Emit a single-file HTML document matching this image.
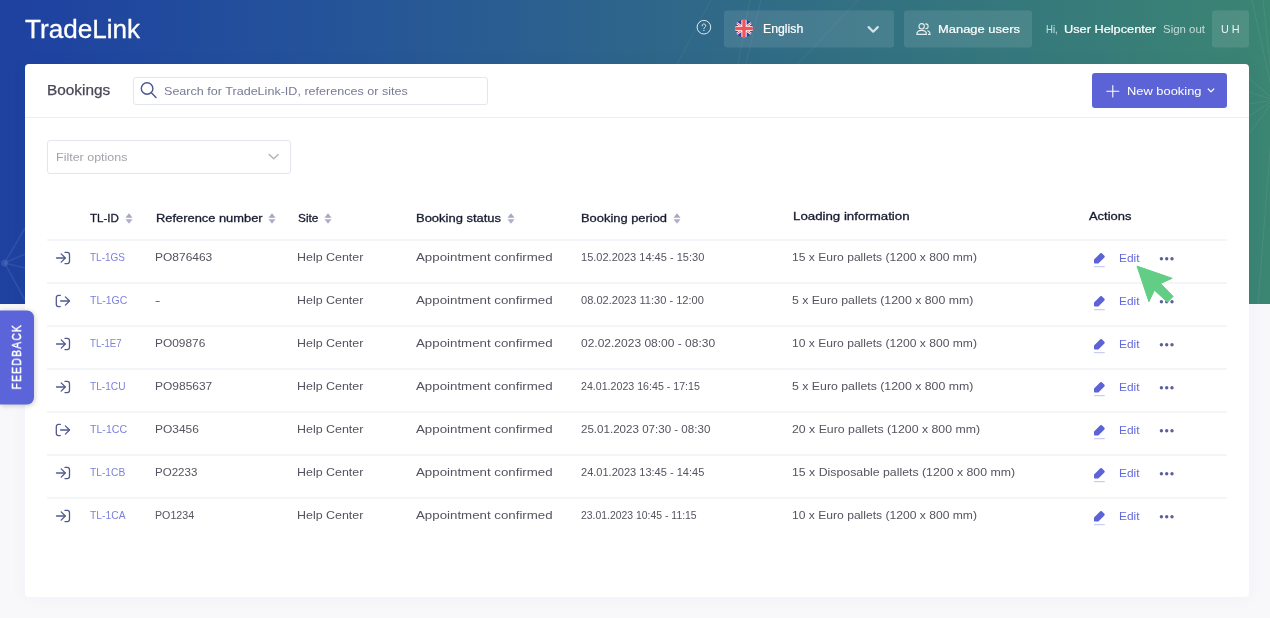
<!DOCTYPE html>
<html lang="en">
<head>
<meta charset="utf-8">
<title>TradeLink - Bookings</title>
<style>
*{box-sizing:border-box;margin:0;padding:0}
html,body{width:1270px;height:618px;overflow:hidden}
body{position:relative;background:#f8f8fb;font-family:"Liberation Sans",Arial,sans-serif;font-size:11px;color:#4b4b58}
.page{position:absolute;left:0;top:0;width:1270px;height:618px;overflow:hidden;transform:translateZ(0);will-change:transform}
a{text-decoration:none}
span,a{white-space:pre;display:inline-block;transform-origin:0 50%}
.banner{position:absolute;left:0;top:0;width:1270px;height:304px;background:linear-gradient(90deg,#1e41a0 0%,#1f44a0 5%,#24529a 24%,#2e668a 51%,#3b8573 100%);overflow:hidden}
.banner svg{position:absolute;left:0;top:0}
.logo{position:absolute;left:24.6px;top:9px;transform:translateY(.4px);font-size:26.5px;line-height:40px;color:#fff;-webkit-text-stroke:.3px #fff}
.top{position:absolute;top:10px;height:37px;line-height:37px;color:#fff;font-size:12px;transform:translateY(.5px)}
.med{-webkit-text-stroke:.2px #fff}
.pill{background:rgba(255,255,255,.1);border-radius:3px}
.top>span{position:absolute;top:0}
.dim{opacity:.72}
.top svg{position:absolute}
.help{position:absolute;left:696px;top:19.3px}
.card{position:absolute;left:25px;top:64px;width:1224px;height:533px;background:#fff;border-radius:4px;box-shadow:0 0 18px rgba(56,71,109,.04)}
.card-head{position:absolute;left:0;top:0;width:1224px;height:54px;border-bottom:1px solid #eceef4}
.title{position:absolute;left:22px;top:16px;font-size:14px;line-height:20px;color:#484658;-webkit-text-stroke:.25px #484658}
.search{position:absolute;left:108px;top:13px;width:355px;height:28px;border:1px solid #e4e6ef;border-radius:3px}
.search span{position:absolute;left:30px;top:0;line-height:27px;font-size:11.5px;color:#787b93}
.search svg{position:absolute;left:5px;top:2px}
.btn{position:absolute;left:1067px;top:9px;width:135px;height:35px;background:#5b63d6;border-radius:3px;color:#fff;line-height:35px;font-size:11px}
.btn span{position:absolute;left:34.7px;top:.7px}
.btn svg{position:absolute}
.filter{position:absolute;left:22px;top:76px;width:244px;height:34px;border:1px solid #e4e6ef;border-radius:3px;line-height:32px;font-size:11.5px;color:#a3a3ab}
.filter span{position:absolute;left:8px;top:0}
.filter svg{position:absolute;left:220px;top:12px}
table{position:absolute;left:22px;top:130px;width:1180px;border-collapse:separate;border-spacing:0;table-layout:fixed}
th,td{text-align:left;white-space:nowrap;vertical-align:top;line-height:20px;padding:0;position:relative}
th{height:47px;padding-top:15px;font-weight:normal;color:#181c32;-webkit-text-stroke:.3px #181c32;border-bottom:2px solid #f4f5f9}
th.ns{padding-top:13px}
td{height:43px;padding-top:7px;border-bottom:2px solid #f4f5f9;color:#53545f}
tr:last-child td{border-bottom:none}
a.id{color:#7c82dc}
.sort{position:relative;margin-left:5.8px;top:1px}
svg.ic{position:absolute;left:8px;top:10px}
td.act svg.pen{position:absolute;left:4px;top:11.2px}
td.act a.edit{position:absolute;left:30px;top:7.3px;color:#636ada}
td.act svg.dots{position:absolute;left:70px;top:15px}
.fb{position:absolute;left:0;top:310px;width:34px;height:94px;background:#5b64d8;border-radius:0 7px 7px 0;box-shadow:1px 1px 5px rgba(0,0,0,.18);transform:translateY(.5px)}
.fbt{position:absolute;left:8.5px;top:79px;height:16px;line-height:16px;transform:rotate(-90deg);transform-origin:0 0;color:#fff;font-size:12.5px;-webkit-text-stroke:.4px #fff}
.cursor{position:absolute;left:1130px;top:260px}
th span,td span,td a.id{position:relative;top:-.6px}
td.c-site span,td.c-load span,td.c-ref span{left:-.8px}
td.c-id a,td.c-per span,td.c-status span{left:-.3px}
</style>
</head>
<body>
<div class="page">
<div class="banner">
  <svg width="1270" height="304" viewBox="0 0 1270 304" fill="none" stroke="#fff" stroke-width="1">
    <g stroke-opacity=".06">
      <path d="M711 0 677 64M750 0 738 64M761 0 746 64M858 0 798 64"/>
      <path d="M4.5 263 25 228M4.5 263 25 254M4.5 263 25 268M4.5 263 25 300" stroke-opacity=".08" stroke-width="1.6"/>
      <path d="M1274 100 1249 78M1274 100 1249 92M1274 100 1249 104M1274 100 1249 116M1274 100 1249 134M1274 100 1258 304M1274 100 1263 0M1274 100 1252 0" stroke-opacity=".07"/>
    </g>
    <circle cx="4.5" cy="263" r="3.5" fill="#fff" fill-opacity=".1" stroke="none"/>
  </svg>
</div>
<div class="logo"><span style="transform:scaleX(0.984);margin-right:-1.9px">TradeLink</span></div>

<svg class="help" width="16" height="16" viewBox="0 0 16 16" fill="none" stroke="#fff" stroke-opacity=".85"><circle cx="7.9" cy="8.2" r="6.8" stroke-width="1"/><path d="M6.1 6.8a1.8 1.8 0 1 1 2.7 1.5c-.6.4-.9.7-.9 1.3" stroke-width=".95" stroke-linecap="round"/><circle cx="7.9" cy="11.4" r=".65" fill="#fff" fill-opacity=".85" stroke="none"/></svg>

<div class="top pill" style="left:724px;width:170px">
  <svg style="left:11.2px;top:9.3px" width="18" height="18" viewBox="0 0 18 18"><defs><clipPath id="fc"><circle cx="9" cy="9" r="9"/></clipPath></defs><g clip-path="url(#fc)"><rect width="18" height="18" fill="#3a3c9c"/><path d="M-3 0 21 18M21 0-3 18" stroke="#fff" stroke-width="2.5"/><path d="M-3 0 21 18M21 0-3 18" stroke="#ee5459" stroke-width="1"/><path d="M9 0V18M0 9H18" stroke="#fff" stroke-width="5.2"/><path d="M9 0V18M0 9H18" stroke="#ee5459" stroke-width="3.4"/></g></svg>
  <span class="med" style="left:38.8px"><span style="transform:scaleX(1.024);margin-right:0.9px">English</span></span>
  <svg style="left:142px;top:14px" width="14" height="10" viewBox="0 0 14 10" fill="none" stroke="#fff" stroke-opacity=".78" stroke-width="2.2" stroke-linecap="round" stroke-linejoin="round"><path d="M2.6 2.6 7.2 7.2 11.8 2.6"/></svg>
</div>
<div class="top pill" style="left:904px;width:128px">
  <svg style="left:12px;top:11.6px" width="15" height="13" viewBox="0 0 16 14" fill="none" stroke="#fff" stroke-opacity=".88" stroke-width="1.15" stroke-linecap="round" stroke-linejoin="round"><circle cx="6" cy="4.1" r="2.9"/><path d="M.8 12.8c0-2.6 2.3-4.3 5.2-4.3s5.2 1.7 5.2 4.3z"/><path d="M10.4 1.5a2.6 2.6 0 0 1 0 5.2"/><path d="M12.6 9c1.6.6 2.6 1.9 2.6 3.8h-1.8"/></svg>
  <span class="med" style="left:33.8px;font-size:11px"><span style="transform:scaleX(1.175);margin-right:12.2px">Manage users</span></span>
</div>
<div class="top" style="left:1045px;width:165px">
  <span style="left:0.5px;font-size:11px;opacity:.75"><span style="transform:scaleX(0.870);margin-right:-1.8px">Hi,</span></span>
  <span class="med" style="left:18.8px;font-size:11px"><span style="transform:scaleX(1.159);margin-right:12.6px">User Helpcenter</span></span>
  <span style="left:118px;font-size:10.5px;opacity:.7"><span style="transform:scaleX(1.090);margin-right:3.5px">Sign out</span></span>
</div>
<div class="top pill" style="left:1212px;width:37px"><span style="left:9px;opacity:.9;font-size:10.5px"><span style="transform:scaleX(1.034);margin-right:0.6px">U H</span></span></div>

<div class="card">
  <div class="card-head">
    <div class="title"><span style="transform:scaleX(1.097);margin-right:5.6px">Bookings</span></div>
    <div class="search">
      <svg width="20" height="20" viewBox="0 0 20 20" fill="none" stroke="#4b5390" stroke-width="1.4" stroke-linecap="round"><circle cx="8.1" cy="8.5" r="5.8"/><path d="M12.4 12.8 17 17.5"/></svg>
      <span style="transform:scaleX(1.093);margin-right:20.7px">Search for TradeLink-ID, references or sites</span>
    </div>
    <div class="btn">
      <svg style="left:14px;top:12px" width="14" height="13" viewBox="0 0 14 13" stroke="#fff" stroke-width="1.1" stroke-linecap="round"><path d="M6.8 .6V12M.8 6.3H12.8"/></svg>
      <span style="transform:scaleX(1.171);margin-right:10.9px">New booking</span>
      <svg style="left:115px;top:15px" width="8" height="5" viewBox="0 0 8 5" fill="none" stroke="#fff" stroke-width="1.2" stroke-linecap="round" stroke-linejoin="round"><path d="M1.2 1 4 3.8 6.8 1"/></svg>
    </div>
  </div>
  <div class="filter">
    <span style="transform:scaleX(1.086);margin-right:5.7px">Filter options</span>
    <svg width="12" height="8" viewBox="0 0 12 8" fill="none" stroke="#b4b4ba" stroke-width="1.5" stroke-linecap="round" stroke-linejoin="round"><path d="M1.2 1.5 5.7 5.7 10.2 1.5"/></svg>
  </div>
  <table>
    <colgroup><col style="width:43px"><col style="width:66px"><col style="width:142px"><col style="width:118px"><col style="width:165px"><col style="width:212px"><col style="width:296px"><col></colgroup>
    <thead><tr>
      <th></th>
      <th><span style="transform:scaleX(1.051);margin-right:1.4px">TL-ID</span><svg class="sort" width="8" height="11" viewBox="0 0 8 11"><path d="M4 .3 7.5 4.7H.5z" fill="#a6a7c2"/><path d="M4 10.7 7.5 6.3H.5z" fill="#adaec8"/></svg></th>
      <th><span style="transform:scaleX(1.170);margin-right:15.5px">Reference number</span><svg class="sort" width="8" height="11" viewBox="0 0 8 11"><path d="M4 .3 7.5 4.7H.5z" fill="#a6a7c2"/><path d="M4 10.7 7.5 6.3H.5z" fill="#adaec8"/></svg></th>
      <th><span style="transform:scaleX(1.075);margin-right:1.4px">Site</span><svg class="sort" width="8" height="11" viewBox="0 0 8 11"><path d="M4 .3 7.5 4.7H.5z" fill="#a6a7c2"/><path d="M4 10.7 7.5 6.3H.5z" fill="#adaec8"/></svg></th>
      <th><span style="transform:scaleX(1.179);margin-right:12.9px">Booking status</span><svg class="sort" width="8" height="11" viewBox="0 0 8 11"><path d="M4 .3 7.5 4.7H.5z" fill="#a6a7c2"/><path d="M4 10.7 7.5 6.3H.5z" fill="#adaec8"/></svg></th>
      <th><span style="transform:scaleX(1.172);margin-right:12.6px">Booking period</span><svg class="sort" width="8" height="11" viewBox="0 0 8 11"><path d="M4 .3 7.5 4.7H.5z" fill="#a6a7c2"/><path d="M4 10.7 7.5 6.3H.5z" fill="#adaec8"/></svg></th>
      <th class="ns"><span style="transform:scaleX(1.206);margin-right:19.9px">Loading information</span></th>
      <th class="ns"><span style="transform:scaleX(1.175);margin-right:6.3px">Actions</span></th>
    </tr></thead>
    <tbody>
      <tr><td><svg class="ic" width="16" height="14" viewBox="0 0 16 14" fill="none" stroke="#525990" stroke-width="1.3" stroke-linecap="round" stroke-linejoin="round"><path d="M1.5 7H10"/><path d="M6.2 2.9 10.3 7 6.2 11.1"/><path d="M10 1.4H12.2A2.3 2.3 0 0 1 14.5 3.7V10.3A2.3 2.3 0 0 1 12.2 12.6H10"/></svg></td><td class="c-id"><a class="id" style="transform:scaleX(0.909);margin-right:-3.5px">TL-1GS</a></td><td class="c-ref"><span style="transform:scaleX(1.089);margin-right:4.7px">PO876463</span></td><td class="c-site"><span style="transform:scaleX(1.131);margin-right:7.7px">Help Center</span></td><td class="c-status"><span style="transform:scaleX(1.208);margin-right:23.5px">Appointment confirmed</span></td><td class="c-per"><span style="transform:scaleX(1.003);margin-right:0.3px">15.02.2023 14:45 - 15:30</span></td><td class="c-load"><span style="transform:scaleX(1.100);margin-right:16.9px">15 x Euro pallets (1200 x 800 mm)</span></td><td class="act"><svg class="pen" width="13" height="16" viewBox="0 0 13 16"><path d="M7.3 1.3a1.1 1.1 0 0 1 1.55 0l2.55 2.55a1.1 1.1 0 0 1 0 1.55L5.6 11.2a1 1 0 0 1-.7.3H1.8a.8.8 0 0 1-.8-.8V8a1 1 0 0 1 .3-.7z" fill="#5b63d6"/><rect x="0.9" y="13.9" width="11" height="1.3" rx=".6" fill="#5b63d6" opacity=".32"/></svg><a class="edit" style="transform:scaleX(1.081);margin-right:1.5px">Edit</a><svg class="dots" width="16" height="6" viewBox="0 0 16 6" fill="#5a609a"><circle cx="2.4" cy="2.7" r="1.7"/><circle cx="7.7" cy="2.7" r="1.7"/><circle cx="13" cy="2.7" r="1.7"/></svg></td></tr>
      <tr><td><svg class="ic" width="16" height="14" viewBox="0 0 16 14" fill="none" stroke="#525990" stroke-width="1.3" stroke-linecap="round" stroke-linejoin="round"><path d="M5.6 7H14.4"/><path d="M10.4 2.9 14.5 7 10.4 11.1"/><path d="M5.3 1.4H3.6A2.3 2.3 0 0 0 1.3 3.7V10.3A2.3 2.3 0 0 0 3.6 12.6H5.3"/></svg></td><td class="c-id"><a class="id" style="transform:scaleX(0.953);margin-right:-1.8px">TL-1GC</a></td><td class="c-ref"><span style="transform:scaleX(1.471);margin-right:1.7px">-</span></td><td class="c-site"><span style="transform:scaleX(1.131);margin-right:7.7px">Help Center</span></td><td class="c-status"><span style="transform:scaleX(1.208);margin-right:23.5px">Appointment confirmed</span></td><td class="c-per"><span style="transform:scaleX(1.006);margin-right:0.8px">08.02.2023 11:30 - 12:00</span></td><td class="c-load"><span style="transform:scaleX(1.119);margin-right:19.3px">5 x Euro pallets (1200 x 800 mm)</span></td><td class="act"><svg class="pen" width="13" height="16" viewBox="0 0 13 16"><path d="M7.3 1.3a1.1 1.1 0 0 1 1.55 0l2.55 2.55a1.1 1.1 0 0 1 0 1.55L5.6 11.2a1 1 0 0 1-.7.3H1.8a.8.8 0 0 1-.8-.8V8a1 1 0 0 1 .3-.7z" fill="#5b63d6"/><rect x="0.9" y="13.9" width="11" height="1.3" rx=".6" fill="#5b63d6" opacity=".32"/></svg><a class="edit" style="transform:scaleX(1.081);margin-right:1.5px">Edit</a><svg class="dots" width="16" height="6" viewBox="0 0 16 6" fill="#5a609a"><circle cx="2.4" cy="2.7" r="1.7"/><circle cx="7.7" cy="2.7" r="1.7"/><circle cx="13" cy="2.7" r="1.7"/></svg></td></tr>
      <tr><td><svg class="ic" width="16" height="14" viewBox="0 0 16 14" fill="none" stroke="#525990" stroke-width="1.3" stroke-linecap="round" stroke-linejoin="round"><path d="M1.5 7H10"/><path d="M6.2 2.9 10.3 7 6.2 11.1"/><path d="M10 1.4H12.2A2.3 2.3 0 0 1 14.5 3.7V10.3A2.3 2.3 0 0 1 12.2 12.6H10"/></svg></td><td class="c-id"><a class="id" style="transform:scaleX(0.876);margin-right:-4.5px">TL-1E7</a></td><td class="c-ref"><span style="transform:scaleX(1.082);margin-right:3.8px">PO09876</span></td><td class="c-site"><span style="transform:scaleX(1.131);margin-right:7.7px">Help Center</span></td><td class="c-status"><span style="transform:scaleX(1.208);margin-right:23.5px">Appointment confirmed</span></td><td class="c-per"><span style="transform:scaleX(1.091);margin-right:11.1px">02.02.2023 08:00 - 08:30</span></td><td class="c-load"><span style="transform:scaleX(1.100);margin-right:16.9px">10 x Euro pallets (1200 x 800 mm)</span></td><td class="act"><svg class="pen" width="13" height="16" viewBox="0 0 13 16"><path d="M7.3 1.3a1.1 1.1 0 0 1 1.55 0l2.55 2.55a1.1 1.1 0 0 1 0 1.55L5.6 11.2a1 1 0 0 1-.7.3H1.8a.8.8 0 0 1-.8-.8V8a1 1 0 0 1 .3-.7z" fill="#5b63d6"/><rect x="0.9" y="13.9" width="11" height="1.3" rx=".6" fill="#5b63d6" opacity=".32"/></svg><a class="edit" style="transform:scaleX(1.081);margin-right:1.5px">Edit</a><svg class="dots" width="16" height="6" viewBox="0 0 16 6" fill="#5a609a"><circle cx="2.4" cy="2.7" r="1.7"/><circle cx="7.7" cy="2.7" r="1.7"/><circle cx="13" cy="2.7" r="1.7"/></svg></td></tr>
      <tr><td><svg class="ic" width="16" height="14" viewBox="0 0 16 14" fill="none" stroke="#525990" stroke-width="1.3" stroke-linecap="round" stroke-linejoin="round"><path d="M1.5 7H10"/><path d="M6.2 2.9 10.3 7 6.2 11.1"/><path d="M10 1.4H12.2A2.3 2.3 0 0 1 14.5 3.7V10.3A2.3 2.3 0 0 1 12.2 12.6H10"/></svg></td><td class="c-id"><a class="id" style="transform:scaleX(0.922);margin-right:-3.0px">TL-1CU</a></td><td class="c-ref"><span style="transform:scaleX(1.089);margin-right:4.7px">PO985637</span></td><td class="c-site"><span style="transform:scaleX(1.131);margin-right:7.7px">Help Center</span></td><td class="c-status"><span style="transform:scaleX(1.208);margin-right:23.5px">Appointment confirmed</span></td><td class="c-per"><span style="transform:scaleX(0.967);margin-right:-4.1px">24.01.2023 16:45 - 17:15</span></td><td class="c-load"><span style="transform:scaleX(1.119);margin-right:19.3px">5 x Euro pallets (1200 x 800 mm)</span></td><td class="act"><svg class="pen" width="13" height="16" viewBox="0 0 13 16"><path d="M7.3 1.3a1.1 1.1 0 0 1 1.55 0l2.55 2.55a1.1 1.1 0 0 1 0 1.55L5.6 11.2a1 1 0 0 1-.7.3H1.8a.8.8 0 0 1-.8-.8V8a1 1 0 0 1 .3-.7z" fill="#5b63d6"/><rect x="0.9" y="13.9" width="11" height="1.3" rx=".6" fill="#5b63d6" opacity=".32"/></svg><a class="edit" style="transform:scaleX(1.081);margin-right:1.5px">Edit</a><svg class="dots" width="16" height="6" viewBox="0 0 16 6" fill="#5a609a"><circle cx="2.4" cy="2.7" r="1.7"/><circle cx="7.7" cy="2.7" r="1.7"/><circle cx="13" cy="2.7" r="1.7"/></svg></td></tr>
      <tr><td><svg class="ic" width="16" height="14" viewBox="0 0 16 14" fill="none" stroke="#525990" stroke-width="1.3" stroke-linecap="round" stroke-linejoin="round"><path d="M5.6 7H14.4"/><path d="M10.4 2.9 14.5 7 10.4 11.1"/><path d="M5.3 1.4H3.6A2.3 2.3 0 0 0 1.3 3.7V10.3A2.3 2.3 0 0 0 3.6 12.6H5.3"/></svg></td><td class="c-id"><a class="id" style="transform:scaleX(0.963);margin-right:-1.4px">TL-1CC</a></td><td class="c-ref"><span style="transform:scaleX(1.087);margin-right:3.5px">PO3456</span></td><td class="c-site"><span style="transform:scaleX(1.131);margin-right:7.7px">Help Center</span></td><td class="c-status"><span style="transform:scaleX(1.208);margin-right:23.5px">Appointment confirmed</span></td><td class="c-per"><span style="transform:scaleX(1.052);margin-right:6.4px">25.01.2023 07:30 - 08:30</span></td><td class="c-load"><span style="transform:scaleX(1.118);margin-right:19.8px">20 x Euro pallets (1200 x 800 mm)</span></td><td class="act"><svg class="pen" width="13" height="16" viewBox="0 0 13 16"><path d="M7.3 1.3a1.1 1.1 0 0 1 1.55 0l2.55 2.55a1.1 1.1 0 0 1 0 1.55L5.6 11.2a1 1 0 0 1-.7.3H1.8a.8.8 0 0 1-.8-.8V8a1 1 0 0 1 .3-.7z" fill="#5b63d6"/><rect x="0.9" y="13.9" width="11" height="1.3" rx=".6" fill="#5b63d6" opacity=".32"/></svg><a class="edit" style="transform:scaleX(1.081);margin-right:1.5px">Edit</a><svg class="dots" width="16" height="6" viewBox="0 0 16 6" fill="#5a609a"><circle cx="2.4" cy="2.7" r="1.7"/><circle cx="7.7" cy="2.7" r="1.7"/><circle cx="13" cy="2.7" r="1.7"/></svg></td></tr>
      <tr><td><svg class="ic" width="16" height="14" viewBox="0 0 16 14" fill="none" stroke="#525990" stroke-width="1.3" stroke-linecap="round" stroke-linejoin="round"><path d="M1.5 7H10"/><path d="M6.2 2.9 10.3 7 6.2 11.1"/><path d="M10 1.4H12.2A2.3 2.3 0 0 1 14.5 3.7V10.3A2.3 2.3 0 0 1 12.2 12.6H10"/></svg></td><td class="c-id"><a class="id" style="transform:scaleX(0.931);margin-right:-2.6px">TL-1CB</a></td><td class="c-ref"><span style="transform:scaleX(1.048);margin-right:1.9px">PO2233</span></td><td class="c-site"><span style="transform:scaleX(1.131);margin-right:7.7px">Help Center</span></td><td class="c-status"><span style="transform:scaleX(1.208);margin-right:23.5px">Appointment confirmed</span></td><td class="c-per"><span style="transform:scaleX(1.003);margin-right:0.3px">24.01.2023 13:45 - 14:45</span></td><td class="c-load"><span style="transform:scaleX(1.119);margin-right:23.7px">15 x Disposable pallets (1200 x 800 mm)</span></td><td class="act"><svg class="pen" width="13" height="16" viewBox="0 0 13 16"><path d="M7.3 1.3a1.1 1.1 0 0 1 1.55 0l2.55 2.55a1.1 1.1 0 0 1 0 1.55L5.6 11.2a1 1 0 0 1-.7.3H1.8a.8.8 0 0 1-.8-.8V8a1 1 0 0 1 .3-.7z" fill="#5b63d6"/><rect x="0.9" y="13.9" width="11" height="1.3" rx=".6" fill="#5b63d6" opacity=".32"/></svg><a class="edit" style="transform:scaleX(1.081);margin-right:1.5px">Edit</a><svg class="dots" width="16" height="6" viewBox="0 0 16 6" fill="#5a609a"><circle cx="2.4" cy="2.7" r="1.7"/><circle cx="7.7" cy="2.7" r="1.7"/><circle cx="13" cy="2.7" r="1.7"/></svg></td></tr>
      <tr><td><svg class="ic" width="16" height="14" viewBox="0 0 16 14" fill="none" stroke="#525990" stroke-width="1.3" stroke-linecap="round" stroke-linejoin="round"><path d="M1.5 7H10"/><path d="M6.2 2.9 10.3 7 6.2 11.1"/><path d="M10 1.4H12.2A2.3 2.3 0 0 1 14.5 3.7V10.3A2.3 2.3 0 0 1 12.2 12.6H10"/></svg></td><td class="c-id"><a class="id" style="transform:scaleX(0.937);margin-right:-2.4px">TL-1CA</a></td><td class="c-ref"><span style="transform:scaleX(0.971);margin-right:-1.2px">PO1234</span></td><td class="c-site"><span style="transform:scaleX(1.131);margin-right:7.7px">Help Center</span></td><td class="c-status"><span style="transform:scaleX(1.208);margin-right:23.5px">Appointment confirmed</span></td><td class="c-per"><span style="transform:scaleX(0.947);margin-right:-6.4px">23.01.2023 10:45 - 11:15</span></td><td class="c-load"><span style="transform:scaleX(1.100);margin-right:16.9px">10 x Euro pallets (1200 x 800 mm)</span></td><td class="act"><svg class="pen" width="13" height="16" viewBox="0 0 13 16"><path d="M7.3 1.3a1.1 1.1 0 0 1 1.55 0l2.55 2.55a1.1 1.1 0 0 1 0 1.55L5.6 11.2a1 1 0 0 1-.7.3H1.8a.8.8 0 0 1-.8-.8V8a1 1 0 0 1 .3-.7z" fill="#5b63d6"/><rect x="0.9" y="13.9" width="11" height="1.3" rx=".6" fill="#5b63d6" opacity=".32"/></svg><a class="edit" style="transform:scaleX(1.081);margin-right:1.5px">Edit</a><svg class="dots" width="16" height="6" viewBox="0 0 16 6" fill="#5a609a"><circle cx="2.4" cy="2.7" r="1.7"/><circle cx="7.7" cy="2.7" r="1.7"/><circle cx="13" cy="2.7" r="1.7"/></svg></td></tr>
    </tbody>
  </table>
</div>

<div class="fb"><div class="fbt"><span style="letter-spacing:1.4px;transform:scaleX(.835)">FEEDBACK</span></div></div>
<svg class="cursor" width="50" height="46" viewBox="0 0 50 46"><path d="M7 6.1 42.2 18.3 30.6 23.5 43.1 36.4 37.5 42.2 24.4 30.2 18.9 41.7z" fill="#62cd84" stroke="#62cd84" stroke-width="1" stroke-linejoin="round"/></svg>
</div>
</body>
</html>
